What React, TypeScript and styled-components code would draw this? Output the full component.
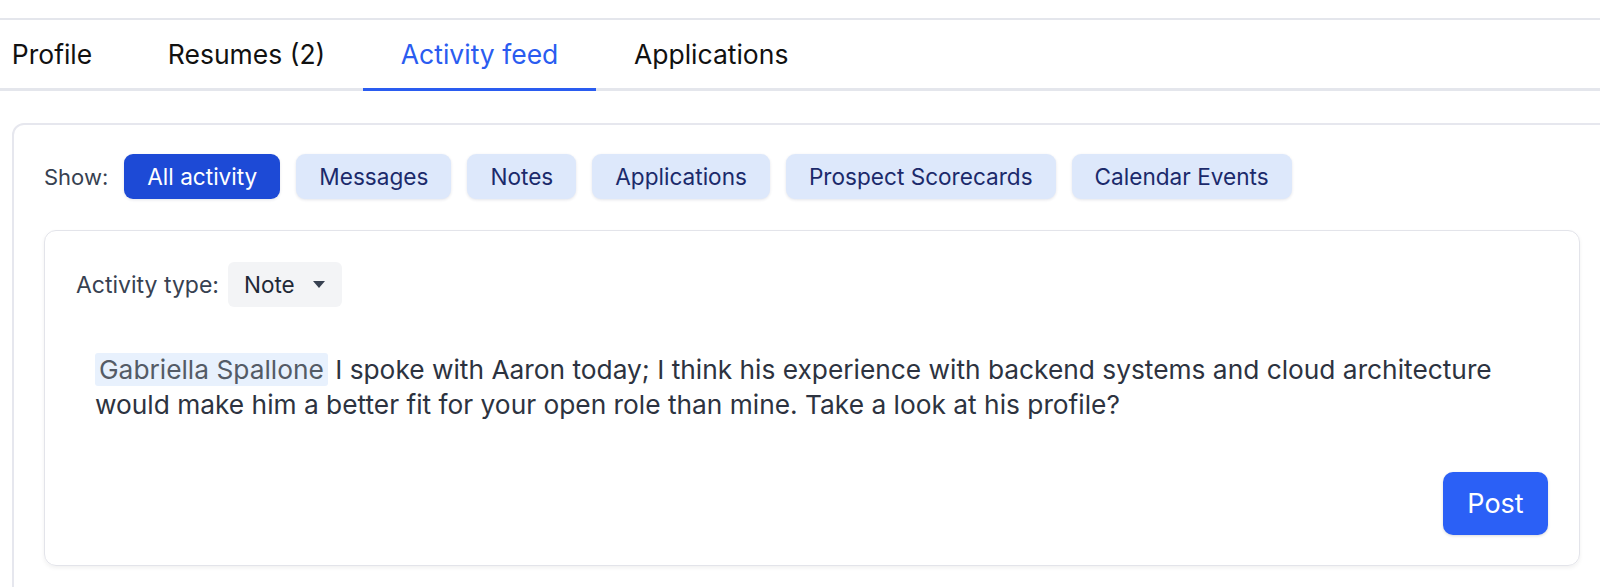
import styled, { createGlobalStyle } from 'styled-components';

const GlobalStyle = createGlobalStyle`
  html, body {
    margin: 0;
    padding: 0;
    background: #ffffff;
    font-family: Inter, "Noto Sans", "Liberation Sans", sans-serif;
    overflow: hidden;
  }
  * { box-sizing: border-box; }
`;

const Page = styled.div`
  width: 1600px;
  height: 587px;
  overflow: hidden;
`;

const TopBar = styled.div`
  height: 20px;
  border-bottom: 2px solid #e4e6ec;
`;

const TabBar = styled.div`
  border-bottom: 3px solid #e4e6ec;
`;

const TabList = styled.div`
  display: flex;
  margin-left: -26px;
  height: 68px;
`;

const Tab = styled.div<{ $active?: boolean }>`
  display: flex;
  align-items: center;
  padding: 0 37.8px;
  font-size: 26.5px;
  color: ${(p) => (p.$active ? '#2a5cf0' : '#111111')};
  border-bottom: 3px solid ${(p) => (p.$active ? '#2a5cf0' : 'transparent')};
  margin-bottom: -3px;
  height: 71px;
`;

const Content = styled.div`
  padding: 32px 0 0 12px;
`;

const OuterCard = styled.div`
  width: 1600px;
  border: 2px solid #e6e7ee;
  border-radius: 12px;
  padding: 29px 30px 40px 30px;
`;

const FilterRow = styled.div`
  display: flex;
  align-items: center;
  gap: 16px;
`;

const ShowLabel = styled.span`
  font-size: 22px;
  color: #374151;
`;

const FilterButton = styled.button<{ $active?: boolean }>`
  height: 45px;
  padding: 0 23px;
  border: none;
  border-radius: 9px;
  font-family: inherit;
  font-size: 22.6px;
  background: ${(p) => (p.$active ? '#1d4ad6' : '#dde8fb')};
  color: ${(p) => (p.$active ? '#ffffff' : '#1b2a6b')};
  box-shadow: 0 1px 3px rgba(30, 41, 80, 0.12);
`;

const InnerCard = styled.div`
  margin-top: 31px;
  border: 1.5px solid #e3e4ea;
  border-radius: 12px;
  padding: 31px 31px 30px 31px;
  box-shadow: 0 2px 4px rgba(0, 0, 0, 0.06);
`;

const TypeRow = styled.div`
  display: flex;
  align-items: center;
  gap: 9px;
`;

const TypeLabel = styled.span`
  font-size: 23px;
  color: #374151;
`;

const Dropdown = styled.div`
  display: flex;
  align-items: center;
  gap: 18px;
  height: 45px;
  padding: 0 17px 0 16px;
  background: #f3f4f6;
  border-radius: 6px;
  font-size: 22.5px;
  color: #1f2937;
`;

const Editor = styled.div`
  margin-top: 45px;
  padding-left: 19px;
  font-size: 26.3px;
  line-height: 35px;
  color: #2d3340;
`;

const Mention = styled.span`
  background: #e8f1fd;
  color: #545b66;
  border-radius: 3px;
  padding: 1px 4px;
`;

const Footer = styled.div`
  display: flex;
  justify-content: flex-end;
  margin-top: 50px;
`;

const PostButton = styled.button`
  height: 63px;
  width: 105px;
  border: none;
  border-radius: 10px;
  background: #2b60f6;
  color: #ffffff;
  font-family: inherit;
  font-size: 27px;
  box-shadow: 0 1px 3px rgba(0, 0, 0, 0.15);
`;

const filters = ['All activity', 'Messages', 'Notes', 'Applications', 'Prospect Scorecards', 'Calendar Events'];

export default function App() {
  return (
    <Page>
      <GlobalStyle />
      <TopBar />
      <TabBar>
        <TabList>
          <Tab>Profile</Tab>
          <Tab>Resumes (2)</Tab>
          <Tab $active>Activity feed</Tab>
          <Tab>Applications</Tab>
        </TabList>
      </TabBar>
      <Content>
        <OuterCard>
          <FilterRow>
            <ShowLabel>Show:</ShowLabel>
            {filters.map((f, i) => (
              <FilterButton key={f} $active={i === 0}>
                {f}
              </FilterButton>
            ))}
          </FilterRow>
          <InnerCard>
            <TypeRow>
              <TypeLabel>Activity type:</TypeLabel>
              <Dropdown>
                Note
                <svg width="12" height="7" viewBox="0 0 12 7">
                  <path d="M0 0 L12 0 L6 7 Z" fill="#374151" />
                </svg>
              </Dropdown>
            </TypeRow>
            <Editor>
              <Mention>Gabriella Spallone</Mention> I spoke with Aaron today; I think his experience with backend
              systems and cloud architecture
              <br />
              would make him a better fit for your open role than mine. Take a look at his profile?
            </Editor>
            <Footer>
              <PostButton>Post</PostButton>
            </Footer>
          </InnerCard>
        </OuterCard>
      </Content>
    </Page>
  );
}
